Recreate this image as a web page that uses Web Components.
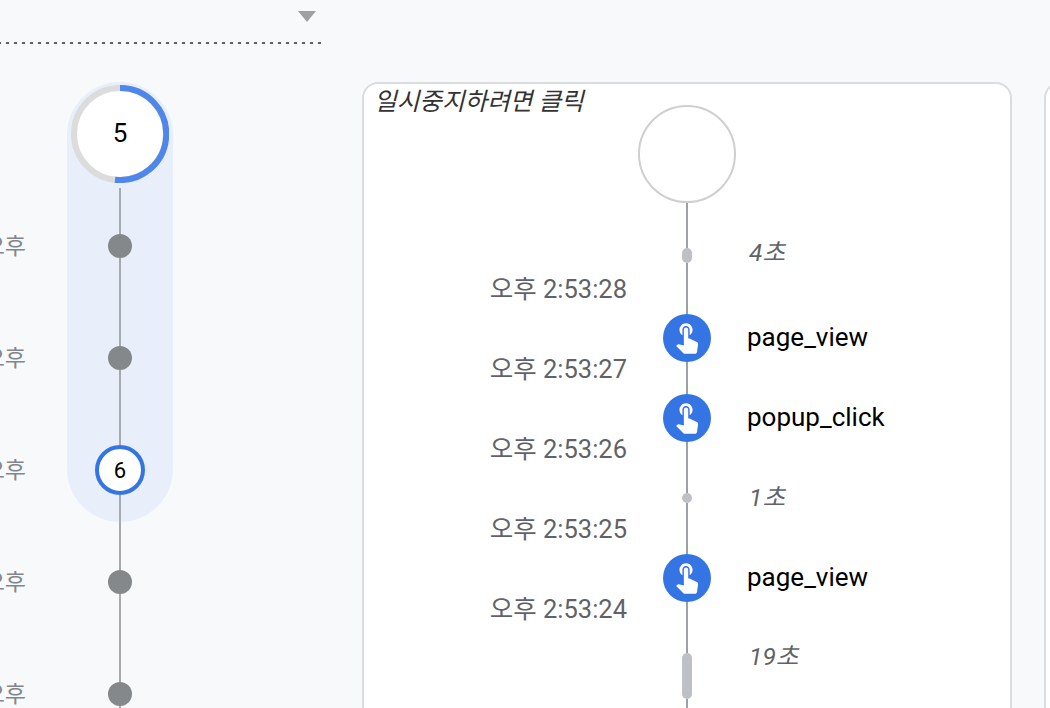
<!DOCTYPE html>
<html lang="ko">
<head>
<meta charset="utf-8">
<title>DebugView</title>
<style>
html, body { margin: 0; height: 708px; overflow: hidden; background: #f8f9fb; }
body {
  display: flex;
  font-family: Roboto, "Noto Sans CJK KR", sans-serif;
}
</style>
</head>
<body>
<stream-column>
  <rail-label slot="labels">오후</rail-label>
  <rail-label slot="labels">오후</rail-label>
  <rail-label slot="labels">오후</rail-label>
  <rail-label slot="labels">오후</rail-label>
  <rail-label slot="labels">오후</rail-label>
</stream-column>
<event-card title-text="일시중지하려면 클릭">
  <time-label slot="times">오후 2:53:28</time-label>
  <time-label slot="times">오후 2:53:27</time-label>
  <time-label slot="times">오후 2:53:26</time-label>
  <time-label slot="times">오후 2:53:25</time-label>
  <time-label slot="times">오후 2:53:24</time-label>

  <flow-line slot="track" len="45"></flow-line>
  <flow-gap slot="track" len="15"></flow-gap>
  <flow-line slot="track" len="51"></flow-line>
  <event-dot slot="track"></event-dot>
  <flow-line slot="track" len="32"></flow-line>
  <event-dot slot="track"></event-dot>
  <flow-line slot="track" len="51"></flow-line>
  <flow-gap slot="track" len="10"></flow-gap>
  <flow-line slot="track" len="51"></flow-line>
  <event-dot slot="track"></event-dot>
  <flow-line slot="track" len="51"></flow-line>
  <flow-gap slot="track" len="46"></flow-gap>
  <flow-line slot="track" len="60"></flow-line>

  <row-name slot="names" kind="gap" lift="16">4초</row-name>
  <row-name slot="names" lift="2">page_view</row-name>
  <row-name slot="names" lift="2">popup_click</row-name>
  <row-name slot="names" kind="gap" lift="6">1초</row-name>
  <row-name slot="names" lift="2">page_view</row-name>
  <row-name slot="names" kind="gap" lift="8">19초</row-name>
</event-card>
<side-card></side-card>

<script>
class RailLabel extends HTMLElement {
  constructor() {
    super();
    this.attachShadow({ mode: "open" }).innerHTML = `
      <style>
      :host {
        display: flex;
        justify-content: flex-end;
        align-items: center;
        height: 112px;
        font-size: 23px;
        color: #80868b;
        white-space: nowrap;
      }
      </style>
      <slot></slot>`;
  }
}
customElements.define("rail-label", RailLabel);

class RailLine extends HTMLElement {
  constructor() {
    super();
    const len = this.getAttribute("len") || 10;
    this.attachShadow({ mode: "open" }).innerHTML = `
      <style>
      :host { display: block; width: 2px; height: ${len}px; background: #a6a9af; flex: none; }
      </style>`;
  }
}
customElements.define("rail-line", RailLine);

class RailDot extends HTMLElement {
  constructor() {
    super();
    this.attachShadow({ mode: "open" }).innerHTML = `
      <style>
      :host { display: block; width: 24px; height: 24px; border-radius: 50%; background: #85888b; flex: none; }
      </style>`;
  }
}
customElements.define("rail-dot", RailDot);

class ProgressRing extends HTMLElement {
  constructor() {
    super();
    this.attachShadow({ mode: "open" }).innerHTML = `
      <style>
      :host {
        display: grid;
        place-items: center;
        width: 98px;
        height: 98px;
        flex: none;
        font-size: 26px;
        color: #000;
      }
      svg, span { grid-area: 1 / 1; }
      svg { display: block; }
      span { padding-bottom: 2px; }
      </style>
      <svg width="98" height="98" viewBox="0 0 98 98">
        <circle cx="49" cy="49" r="46" fill="#fff" stroke="#dcdcdc" stroke-width="6"/>
        <path d="M49 3A46 46 0 1 1 44 94.7" fill="none" stroke="#4f86ec" stroke-width="6"/>
      </svg>
      <span><slot></slot></span>`;
  }
}
customElements.define("progress-ring", ProgressRing);

class CurrentBadge extends HTMLElement {
  constructor() {
    super();
    this.attachShadow({ mode: "open" }).innerHTML = `
      <style>
      :host {
        display: flex;
        align-items: center;
        justify-content: center;
        box-sizing: border-box;
        width: 50px;
        height: 50px;
        flex: none;
        border: 4px solid #3574e3;
        border-radius: 50%;
        background: #fff;
        font-size: 22px;
        color: #000;
      }
      </style>
      <slot></slot>`;
  }
}
customElements.define("current-badge", CurrentBadge);

class StreamColumn extends HTMLElement {
  constructor() {
    super();
    this.attachShadow({ mode: "open" }).innerHTML = `
      <style>
      :host {
        display: block;
        width: 362px;
        flex: none;
      }
      .top {
        display: flex;
        flex-direction: column;
        align-items: flex-end;
        width: 321px;
        height: 82px;
      }
      .arrow {
        width: 0;
        height: 0;
        margin: 11px 5px 0 0;
        border-left: 9px solid transparent;
        border-right: 9px solid transparent;
        border-top: 11px solid #a0a0a0;
      }
      .dots {
        width: 100%;
        height: 2px;
        margin-top: 20px;
        background: repeating-linear-gradient(90deg, #5f6368 0 3px, transparent 3px 8px) -2px 0;
      }
      .body { display: flex; }
      .labels {
        width: 26px;
        padding-top: 106px;
        flex: none;
      }
      .nodes {
        display: flex;
        flex-direction: column;
        align-items: center;
        width: 106px;
        margin-left: 41px;
      }
      .pill {
        display: flex;
        flex-direction: column;
        align-items: center;
        width: 106px;
        height: 440px;
        padding-top: 3px;
        box-sizing: border-box;
        border-radius: 53px;
        background: #e8effa;
        flex: none;
      }
      </style>
      <div class="top"><div class="arrow"></div><div class="dots"></div></div>
      <div class="body">
        <div class="labels"><slot name="labels"></slot></div>
        <div class="nodes">
          <div class="pill">
            <progress-ring>5</progress-ring>
            <rail-line len="46" style="margin-top:5px"></rail-line>
            <rail-dot></rail-dot>
            <rail-line len="88"></rail-line>
            <rail-dot></rail-dot>
            <rail-line len="75"></rail-line>
            <current-badge>6</current-badge>
            <rail-line len="27"></rail-line>
          </div>
          <rail-line len="48"></rail-line>
          <rail-dot></rail-dot>
          <rail-line len="88"></rail-line>
          <rail-dot></rail-dot>
          <rail-line len="20"></rail-line>
        </div>
      </div>`;
  }
}
customElements.define("stream-column", StreamColumn);

class TimeLabel extends HTMLElement {
  constructor() {
    super();
    this.attachShadow({ mode: "open" }).innerHTML = `
      <style>
      :host {
        display: flex;
        justify-content: flex-end;
        align-items: center;
        height: 80px;
        font-size: 25.5px;
        color: #5f6368;
        white-space: nowrap;
      }
      </style>
      <slot></slot>`;
  }
}
customElements.define("time-label", TimeLabel);

class FlowLine extends HTMLElement {
  constructor() {
    super();
    const len = this.getAttribute("len") || 10;
    this.attachShadow({ mode: "open" }).innerHTML = `
      <style>
      :host { display: block; width: 2px; height: ${len}px; background: #9aa0a6; flex: none; }
      </style>`;
  }
}
customElements.define("flow-line", FlowLine);

class FlowGap extends HTMLElement {
  constructor() {
    super();
    const len = this.getAttribute("len") || 10;
    this.attachShadow({ mode: "open" }).innerHTML = `
      <style>
      :host { display: block; width: 10px; height: ${len}px; border-radius: 5px; background: #bdc1c6; flex: none; }
      </style>`;
  }
}
customElements.define("flow-gap", FlowGap);

class EventDot extends HTMLElement {
  constructor() {
    super();
    this.attachShadow({ mode: "open" }).innerHTML = `
      <style>
      :host {
        display: flex;
        align-items: center;
        justify-content: center;
        width: 48px;
        height: 48px;
        border-radius: 50%;
        background: #3574e3;
        flex: none;
      }
      svg { display: block; fill: #fff; }
      </style>
      <svg width="35" height="35" viewBox="0.5 1.5 24 24">
        <path d="M9 11.24V7.5C9 6.12 10.12 5 11.5 5S14 6.12 14 7.5v3.74c1.21-.81 2-2.18 2-3.74C16 5.01 13.99 3 11.5 3S7 5.01 7 7.5c0 1.56.79 2.93 2 3.74zm9.84 4.63l-4.54-2.26c-.17-.07-.35-.11-.54-.11H13v-6c0-.83-.67-1.5-1.5-1.5S10 6.67 10 7.5v10.74l-3.43-.72c-.08-.01-.15-.03-.24-.03-.31 0-.59.13-.79.33l-.79.8 4.94 4.94c.27.27.65.44 1.06.44h6.79c.75 0 1.36-.55 1.47-1.28l.75-5.27c.01-.07.02-.14.02-.2 0-.62-.38-1.16-.91-1.38z"/>
      </svg>`;
  }
}
customElements.define("event-dot", EventDot);

class RowName extends HTMLElement {
  constructor() {
    super();
    const lift = this.getAttribute("lift") || 0;
    this.attachShadow({ mode: "open" }).innerHTML = `
      <style>
      :host {
        display: flex;
        align-items: center;
        box-sizing: border-box;
        height: 80px;
        padding-bottom: ${lift}px;
        font-size: 26px;
        color: #000;
        white-space: nowrap;
      }
      :host([kind="gap"]) { padding-left: 2px; font-size: 24.6px; font-style: italic; color: #5f6368; }
      </style>
      <slot></slot>`;
  }
}
customElements.define("row-name", RowName);

class EventCard extends HTMLElement {
  constructor() {
    super();
    const title = this.getAttribute("title-text") || "";
    this.attachShadow({ mode: "open" }).innerHTML = `
      <style>
      :host {
        display: flex;
        box-sizing: border-box;
        width: 650px;
        height: 800px;
        margin-top: 82px;
        border: 2px solid #dadce0;
        border-radius: 16px;
        background: #fff;
        flex: none;
        overflow: hidden;
      }
      .left { width: 263px; flex: none; }
      .title {
        height: 28px;
        padding: 4px 0 0 10px;
        font-size: 24.6px;
        line-height: 28px;
        font-style: italic;
        color: #333;
        white-space: nowrap;
      }
      .times { margin-top: 130px; }
      .track {
        display: flex;
        flex-direction: column;
        align-items: center;
        width: 98px;
        margin-left: 11px;
        padding-top: 21px;
        flex: none;
      }
      .start {
        box-sizing: border-box;
        width: 98px;
        height: 98px;
        border: 2px solid #cfcfcf;
        border-radius: 50%;
        flex: none;
      }
      .names { margin-left: 11px; padding-top: 134px; }
      </style>
      <div class="left">
        <div class="title">${title}</div>
        <div class="times"><slot name="times"></slot></div>
      </div>
      <div class="track">
        <div class="start"></div>
        <slot name="track"></slot>
      </div>
      <div class="names"><slot name="names"></slot></div>`;
  }
}
customElements.define("event-card", EventCard);

class SideCard extends HTMLElement {
  constructor() {
    super();
    this.attachShadow({ mode: "open" }).innerHTML = `
      <style>
      :host {
        display: block;
        box-sizing: border-box;
        width: 200px;
        height: 800px;
        margin: 82px 0 0 32px;
        border: 2px solid #dadce0;
        border-radius: 16px;
        background: #fff;
        flex: none;
      }
      </style>`;
  }
}
customElements.define("side-card", SideCard);
</script>
</body>
</html>
